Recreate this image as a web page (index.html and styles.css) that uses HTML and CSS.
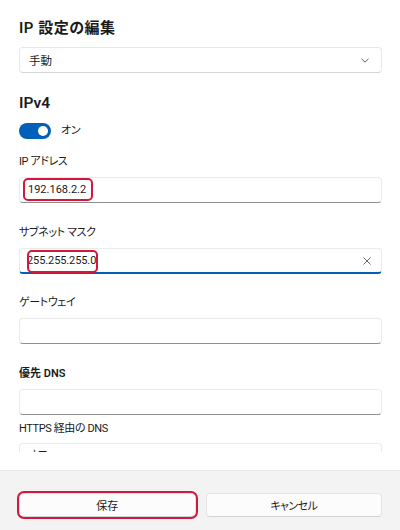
FILE: index.html
```html
<!DOCTYPE html>
<html lang="ja">
<head>
<meta charset="utf-8">
<title>IP 設定の編集</title>
<link rel="stylesheet" href="styles.css">
</head>
<body>
<div class="dialog">
  <div class="scroll">
    <div class="content">
      <h1 class="title">IP 設定の編集</h1>
      <div class="select">
        <span>手動</span>
        <svg class="chev" width="8" height="5" viewBox="0 0 8 5"><path d="M0.5 0.8 L4 4.2 L7.5 0.8" fill="none" stroke="#5f5f5f" stroke-width="1"/></svg>
      </div>
      <h2 class="section">IPv4</h2>
      <div class="toggle-row">
        <span class="toggle"><span class="knob"></span></span>
        <span class="toggle-label">オン</span>
      </div>

      <div class="field f-ip">
        <div class="label">IP アドレス</div>
        <div class="input"><span class="val">192.168.2.2</span><span class="mark mark-ip"></span></div>
      </div>
      <div class="field f-mask">
        <div class="label">サブネット マスク</div>
        <div class="input focus"><span class="val val-mask">255.255.255.0</span><span class="mark mark-mask"></span>
          <svg class="clear" width="8" height="8" viewBox="0 0 8 8"><path d="M0.5 0.5 L7.5 7.5 M7.5 0.5 L0.5 7.5" stroke="#6a6a6a" stroke-width="1"/></svg>
        </div>
      </div>
      <div class="field f-gw">
        <div class="label">ゲートウェイ</div>
        <div class="input"></div>
      </div>
      <div class="field f-dns">
        <div class="label bold">優先 DNS</div>
        <div class="input"></div>
      </div>
      <div class="field f-https">
        <div class="label">HTTPS 経由の DNS</div>
        <div class="input"><span class="val">オフ</span></div>
      </div>
    </div>
  </div>
  <div class="gap"></div>
  <div class="footer">
    <button class="btn save">保存</button>
    <button class="btn kana">キャンセル</button>
  </div>
</div>
</body>
</html>
```
FILE: styles.css
```css
html, body {
  margin: 0;
  padding: 0;
  background: #ffffff;
}
body {
  font-family: Roboto, "Noto Sans CJK JP", sans-serif;
  font-feature-settings: "palt";
  color: #1b1b1b;
  width: 400px;
  height: 530px;
  overflow: hidden;
}
.dialog {
  display: flex;
  flex-direction: column;
  height: 530px;
}
.scroll {
  height: 452px;
  overflow: hidden;
}
.content {
  padding: 16px 18px 0 19px;
}
.title {
  margin: 0;
  font-size: 15px;
  font-weight: 600;
  line-height: 24px;
  letter-spacing: 0.5px;
}
.select {
  margin-top: 7px;
  height: 24px;
  border: 1px solid #e8e8e8;
  border-bottom-color: #d6d6d6;
  border-radius: 4px;
  display: flex;
  align-items: center;
  justify-content: space-between;
  padding: 0 12px 0 9px;
  font-size: 11.5px;
}
.chev {
  display: block;
}
.section {
  margin: 20px 0 0 0;
  font-size: 15.5px;
  font-weight: 600;
  line-height: 20px;
}
.toggle-row {
  margin-top: 10px;
  height: 16px;
  display: flex;
  align-items: center;
  gap: 10px;
}
.toggle {
  width: 32px;
  height: 16px;
  border-radius: 8px;
  background: #005fb8;
  display: flex;
  align-items: center;
  justify-content: flex-end;
  padding-right: 3px;
  box-sizing: border-box;
}
.knob {
  width: 10px;
  height: 10px;
  border-radius: 50%;
  background: #ffffff;
}
.toggle-label {
  font-size: 11px;
  line-height: 16px;
  letter-spacing: -0.3px;
}
.field {
  margin-top: 22px;
}
.f-ip { margin-top: 15px; }
.f-gw { margin-top: 21px; }
.f-dns { margin-top: 22px; }
.f-https { margin-top: 6px; }
.f-https .input { margin-top: 6px; }
.label {
  font-size: 11px;
  line-height: 16px;
  letter-spacing: -0.4px;
}
.label.bold {
  font-weight: 600;
  letter-spacing: 0;
}
.input {
  position: relative;
  margin-top: 7px;
  height: 24px;
  border: 1px solid #ebebeb;
  border-bottom-color: #8f8f8f;
  border-radius: 4px;
  display: flex;
  align-items: center;
  padding-left: 8px;
  font-size: 11px;
}
.input.focus {
  border-bottom: 2px solid #005fb8;
  height: 23px;
}
.val {
  line-height: 16px;
}
.val-mask {
  margin-left: -1px;
  letter-spacing: -0.1px;
}
.mark {
  position: absolute;
  border: 2px solid #d3173d;
  border-radius: 5px;
  box-sizing: border-box;
}
.mark-ip {
  left: 3px;
  top: 0px;
  width: 70px;
  height: 23px;
}
.mark-mask {
  left: 7px;
  top: 1px;
  width: 71px;
  height: 23px;
}
.clear {
  position: absolute;
  right: 10px;
  top: 8px;
}
.gap {
  height: 18px;
}
.footer {
  flex: 1;
  background: #f3f3f3;
  border-top: 1px solid #e5e5e5;
  display: flex;
  gap: 10px;
  padding: 22px 18px 0 19px;
}
.btn {
  flex: 1;
  height: 24px;
  border: 1px solid #e3e3e3;
  border-bottom-color: #d2d2d2;
  border-radius: 4px;
  background: #fcfcfc;
  font-family: Roboto, "Noto Sans CJK JP", sans-serif;
  font-feature-settings: "palt";
  font-size: 11px;
  color: #1b1b1b;
  padding: 0;
}
.btn.kana {
  letter-spacing: -0.6px;
}
.btn.save {
  outline: 2px solid #d3173d;
  outline-offset: 0px;
  border-radius: 5px;
}
```
